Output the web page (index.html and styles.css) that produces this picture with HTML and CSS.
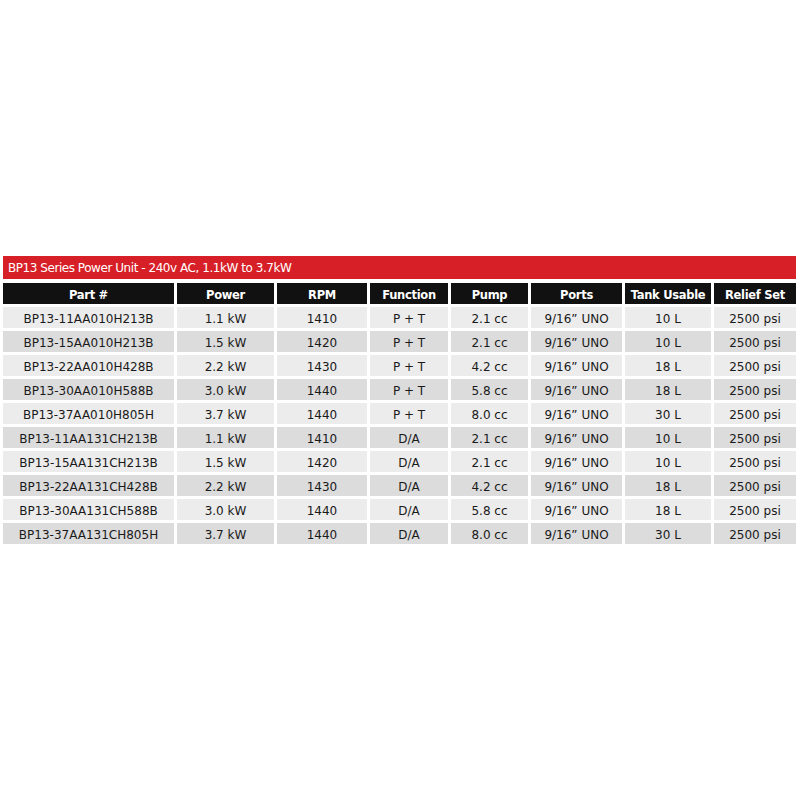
FILE: index.html
```html
<!DOCTYPE html>
<html>
<head>
<meta charset="utf-8">
<link rel="stylesheet" href="styles.css">
</head>
<body>
<div class="wrap">
  <div class="banner">BP13 Series Power Unit - 240v AC, 1.1kW to 3.7kW</div>
  <div class="grid">
    <div class="h">Part #</div><div class="h">Power</div><div class="h">RPM</div><div class="h">Function</div><div class="h">Pump</div><div class="h">Ports</div><div class="h">Tank Usable</div><div class="h">Relief Set</div>

    <div class="c a">BP13-11AA010H213B</div><div class="c a">1.1 kW</div><div class="c a">1410</div><div class="c a">P + T</div><div class="c a">2.1 cc</div><div class="c a">9/16” UNO</div><div class="c a">10 L</div><div class="c a">2500 psi</div>
    <div class="c b">BP13-15AA010H213B</div><div class="c b">1.5 kW</div><div class="c b">1420</div><div class="c b">P + T</div><div class="c b">2.1 cc</div><div class="c b">9/16” UNO</div><div class="c b">10 L</div><div class="c b">2500 psi</div>
    <div class="c a">BP13-22AA010H428B</div><div class="c a">2.2 kW</div><div class="c a">1430</div><div class="c a">P + T</div><div class="c a">4.2 cc</div><div class="c a">9/16” UNO</div><div class="c a">18 L</div><div class="c a">2500 psi</div>
    <div class="c b">BP13-30AA010H588B</div><div class="c b">3.0 kW</div><div class="c b">1440</div><div class="c b">P + T</div><div class="c b">5.8 cc</div><div class="c b">9/16” UNO</div><div class="c b">18 L</div><div class="c b">2500 psi</div>
    <div class="c a">BP13-37AA010H805H</div><div class="c a">3.7 kW</div><div class="c a">1440</div><div class="c a">P + T</div><div class="c a">8.0 cc</div><div class="c a">9/16” UNO</div><div class="c a">30 L</div><div class="c a">2500 psi</div>
    <div class="c b">BP13-11AA131CH213B</div><div class="c b">1.1 kW</div><div class="c b">1410</div><div class="c b">D/A</div><div class="c b">2.1 cc</div><div class="c b">9/16” UNO</div><div class="c b">10 L</div><div class="c b">2500 psi</div>
    <div class="c a">BP13-15AA131CH213B</div><div class="c a">1.5 kW</div><div class="c a">1420</div><div class="c a">D/A</div><div class="c a">2.1 cc</div><div class="c a">9/16” UNO</div><div class="c a">10 L</div><div class="c a">2500 psi</div>
    <div class="c b">BP13-22AA131CH428B</div><div class="c b">2.2 kW</div><div class="c b">1430</div><div class="c b">D/A</div><div class="c b">4.2 cc</div><div class="c b">9/16” UNO</div><div class="c b">18 L</div><div class="c b">2500 psi</div>
    <div class="c a">BP13-30AA131CH588B</div><div class="c a">3.0 kW</div><div class="c a">1440</div><div class="c a">D/A</div><div class="c a">5.8 cc</div><div class="c a">9/16” UNO</div><div class="c a">18 L</div><div class="c a">2500 psi</div>
    <div class="c b">BP13-37AA131CH805H</div><div class="c b">3.7 kW</div><div class="c b">1440</div><div class="c b">D/A</div><div class="c b">8.0 cc</div><div class="c b">9/16” UNO</div><div class="c b">30 L</div><div class="c b">2500 psi</div>
  </div>
</div>
</body>
</html>
```

FILE: styles.css
```css
html, body {
  margin: 0;
  padding: 0;
  background: #ffffff;
}
body {
  font-family: "DejaVu Sans", "Liberation Sans", sans-serif;
}
.wrap {
  margin: 256px 0 0 3px;
  width: 793px;
}
.banner {
  background: #d71f27;
  color: #ffffff;
  height: 23px;
  line-height: 25px;
  padding-left: 5px;
  font-size: 12px;
  letter-spacing: -0.45px;
  margin-bottom: 4px;
  overflow: hidden;
}
.grid {
  display: grid;
  grid-template-columns: 171px 97px 90px 78px 77px 91px 86px 82px;
  grid-auto-rows: 21px;
  column-gap: 3px;
  row-gap: 3px;
}
.h {
  background: #111111;
  color: #ffffff;
  font-weight: bold;
  font-size: 11.5px;
  letter-spacing: -0.3px;
  line-height: 21px;
  padding-top: 2px;
  box-sizing: border-box;
  text-align: center;
  overflow: hidden;
}
.c {
  color: #1a1a1a;
  font-size: 12px;
  line-height: 21px;
  padding-top: 2px;
  box-sizing: border-box;
  text-align: center;
  overflow: hidden;
}
.a { background: #ececec; }
.b { background: #dcdcdc; }
```
